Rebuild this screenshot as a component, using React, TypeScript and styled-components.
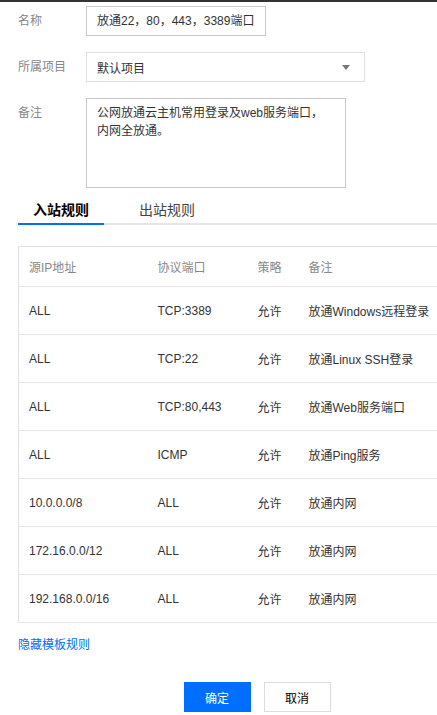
import React from 'react'
import styled, { createGlobalStyle } from 'styled-components'

const GlobalStyle = createGlobalStyle`
    html, body {
        margin: 0;
        padding: 0;
        background: #ffffff;
        overflow: hidden;
    }
    body {
        font-family: "Liberation Sans", "Noto Sans CJK SC", sans-serif;
        font-size: 12px;
        color: #333333;
    }
`

const Dialog = styled.div`
    width: 514px;
    border-top: 2px solid #333333;
    padding: 4px 18px 0 18px;
    box-sizing: border-box;
`

const Form = styled.div`
    display: flex;
    flex-direction: column;
    gap: 16px;
`

const FormRow = styled.div`
    display: flex;
    align-items: flex-start;
`

const Label = styled.div`
    width: 68px;
    flex-shrink: 0;
    color: #888888;
    line-height: 30px;
    font-size: 12px;
`

const Input = styled.div`
    width: 180px;
    height: 30px;
    box-sizing: border-box;
    border: 1px solid #c9c9c9;
    padding: 0 10px;
    line-height: 28px;
    white-space: nowrap;
    overflow: hidden;
    color: #333333;
`

const Select = styled.div`
    width: 279px;
    height: 30px;
    box-sizing: border-box;
    border: 1px solid #e1e1e1;
    padding: 0 10px;
    display: flex;
    align-items: center;
    justify-content: space-between;
    color: #333333;
`

const Caret = styled.span`
    width: 0;
    height: 0;
    border-left: 4px solid transparent;
    border-right: 4px solid transparent;
    border-top: 5px solid #777777;
    margin-right: 4px;
`

const TextArea = styled.div`
    width: 260px;
    height: 90px;
    box-sizing: border-box;
    border: 1px solid #c9c9c9;
    padding: 5px 10px;
    line-height: 18px;
    color: #333333;
`

const TabBar = styled.div`
    display: flex;
    margin-top: 9px;
    border-bottom: 2px solid #e5e5e5;
    margin-right: -18px;
`

const Tab = styled.div<{ $active?: boolean }>`
    width: 86px;
    margin-right: 20px;
    margin-bottom: -2px;
    text-align: center;
    font-size: 14px;
    line-height: 26px;
    font-weight: ${({ $active }) => ($active ? 700 : 400)};
    color: ${({ $active }) => ($active ? '#000000' : '#444444')};
    border-bottom: 2px solid ${({ $active }) => ($active ? '#006eff' : 'transparent')};
`

const Table = styled.table`
    width: 100%;
    margin-top: 21px;
    border-collapse: collapse;
    border: 1px solid #e2e2e2;
    table-layout: fixed;
`

const HeadCell = styled.th<{ $width?: number }>`
    box-sizing: border-box;
    width: ${({ $width }) => ($width ? `${$width}px` : 'auto')};
    height: 40px;
    padding: 0 10px;
    text-align: left;
    font-weight: 400;
    color: #888888;
    border-bottom: 1px solid #e5e5e5;
`

const Cell = styled.td`
    height: 47px;
    padding: 0 10px;
    color: #333333;
    white-space: nowrap;
    border-bottom: 1px solid #e5e5e5;
`

const Link = styled.a`
    display: block;
    margin-top: 14px;
    color: #006eff;
    line-height: 16px;
    text-decoration: none;
`

const Footer = styled.div`
    display: flex;
    justify-content: center;
    gap: 13px;
    margin-top: 29px;
`

const Button = styled.button<{ $primary?: boolean }>`
    width: 67px;
    height: 30px;
    font-family: inherit;
    font-size: 12px;
    border: 1px solid ${({ $primary }) => ($primary ? '#006eff' : '#dddddd')};
    background: ${({ $primary }) => ($primary ? '#006eff' : '#ffffff')};
    color: ${({ $primary }) => ($primary ? '#ffffff' : '#000000')};
    padding: 0;
`

const rules = [
    { source: 'ALL', port: 'TCP:3389', policy: '允许', remark: '放通Windows远程登录' },
    { source: 'ALL', port: 'TCP:22', policy: '允许', remark: '放通Linux SSH登录' },
    { source: 'ALL', port: 'TCP:80,443', policy: '允许', remark: '放通Web服务端口' },
    { source: 'ALL', port: 'ICMP', policy: '允许', remark: '放通Ping服务' },
    { source: '10.0.0.0/8', port: 'ALL', policy: '允许', remark: '放通内网' },
    { source: '172.16.0.0/12', port: 'ALL', policy: '允许', remark: '放通内网' },
    { source: '192.168.0.0/16', port: 'ALL', policy: '允许', remark: '放通内网' },
]

const App = () => {
    return (
        <>
            <GlobalStyle />
            <Dialog>
                <Form>
                    <FormRow>
                        <Label>名称</Label>
                        <Input>放通22，80，443，3389端口</Input>
                    </FormRow>
                    <FormRow>
                        <Label>所属项目</Label>
                        <Select>
                            默认项目
                            <Caret />
                        </Select>
                    </FormRow>
                    <FormRow>
                        <Label>备注</Label>
                        <TextArea>
                            公网放通云主机常用登录及web服务端口，
                            <br />
                            内网全放通。
                        </TextArea>
                    </FormRow>
                </Form>

                <TabBar>
                    <Tab $active>入站规则</Tab>
                    <Tab>出站规则</Tab>
                </TabBar>

                <Table>
                    <thead>
                        <tr>
                            <HeadCell $width={129}>源IP地址</HeadCell>
                            <HeadCell $width={100}>协议端口</HeadCell>
                            <HeadCell $width={51}>策略</HeadCell>
                            <HeadCell>备注</HeadCell>
                        </tr>
                    </thead>
                    <tbody>
                        {rules.map((rule, i) => (
                            <tr key={i}>
                                <Cell>{rule.source}</Cell>
                                <Cell>{rule.port}</Cell>
                                <Cell>{rule.policy}</Cell>
                                <Cell>{rule.remark}</Cell>
                            </tr>
                        ))}
                    </tbody>
                </Table>

                <Link>隐藏模板规则</Link>

                <Footer>
                    <Button $primary>确定</Button>
                    <Button>取消</Button>
                </Footer>
            </Dialog>
        </>
    )
}

export default App
